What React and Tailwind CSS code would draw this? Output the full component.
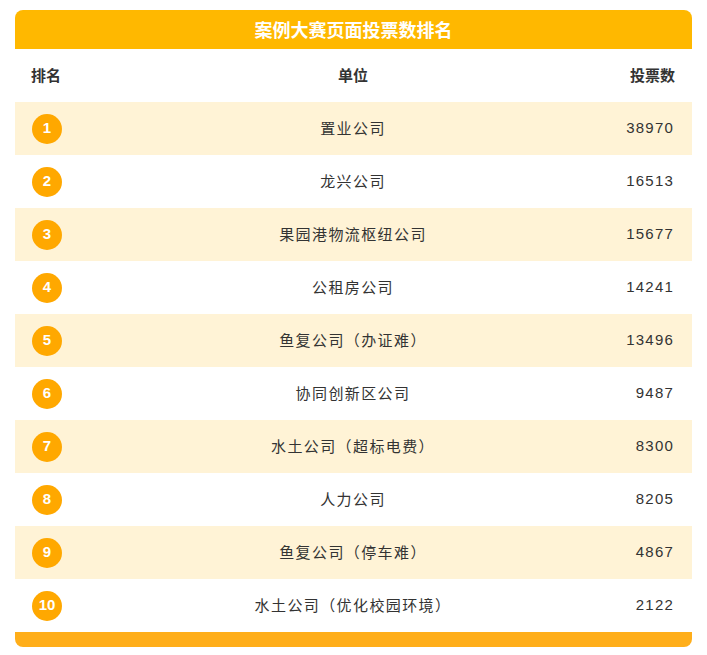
import React from 'react'

const rows = [
    { name: '置业公司', votes: 38970 },
    { name: '龙兴公司', votes: 16513 },
    { name: '果园港物流枢纽公司', votes: 15677 },
    { name: '公租房公司', votes: 14241 },
    { name: '鱼复公司（办证难）', votes: 13496 },
    { name: '协同创新区公司', votes: 9487 },
    { name: '水土公司（超标电费）', votes: 8300 },
    { name: '人力公司', votes: 8205 },
    { name: '鱼复公司（停车难）', votes: 4867 },
    { name: '水土公司（优化校园环境）', votes: 2122 },
]

export default function App() {
    return (
        <div className="min-h-[655px] bg-white pt-[10px] pl-[15px] font-['Liberation_Sans','Noto_Sans_CJK_SC',sans-serif] text-[#333]">
            <div className="w-[677px]">
                {/* Title */}
                <div className="h-[39px] rounded-t-[8px] bg-[#FFB800] flex items-center justify-center">
                    <h2 className="text-[18px] font-bold text-white font-['Noto_Sans_CJK_SC',sans-serif]">
                        案例大赛页面投票数排名
                    </h2>
                </div>

                {/* Header */}
                <div className="h-[53px] flex items-center pl-[16px] pr-[17px] text-[15px] font-bold font-['Noto_Sans_CJK_SC',sans-serif]">
                    <div className="w-[60px]">排名</div>
                    <div className="flex-1 text-center">单位</div>
                    <div className="w-[60px] text-right">投票数</div>
                </div>

                {/* Rows */}
                {rows.map((r, i) => (
                    <div
                        key={r.name}
                        className={`h-[53px] flex items-center pl-[17px] pr-[18px] ${i % 2 === 0 ? 'bg-[#FFF3D6]' : 'bg-white'}`}
                    >
                        <div className="w-[80px]">
                            <span className="w-[30px] h-[30px] rounded-full bg-[#FFA800] text-white font-bold text-[15px] flex items-center justify-center">
                                {i + 1}
                            </span>
                        </div>
                        <div className="flex-1 text-center text-[15px] tracking-[1.4px] font-['Noto_Sans_CJK_SC',sans-serif]">{r.name}</div>
                        <div className="w-[80px] text-right text-[15px] tracking-[1.2px]">{r.votes}</div>
                    </div>
                ))}

                {/* Footer bar */}
                <div className="h-[15px] rounded-b-[8px] bg-[#FFAE1A]" />
            </div>
        </div>
    )
}
